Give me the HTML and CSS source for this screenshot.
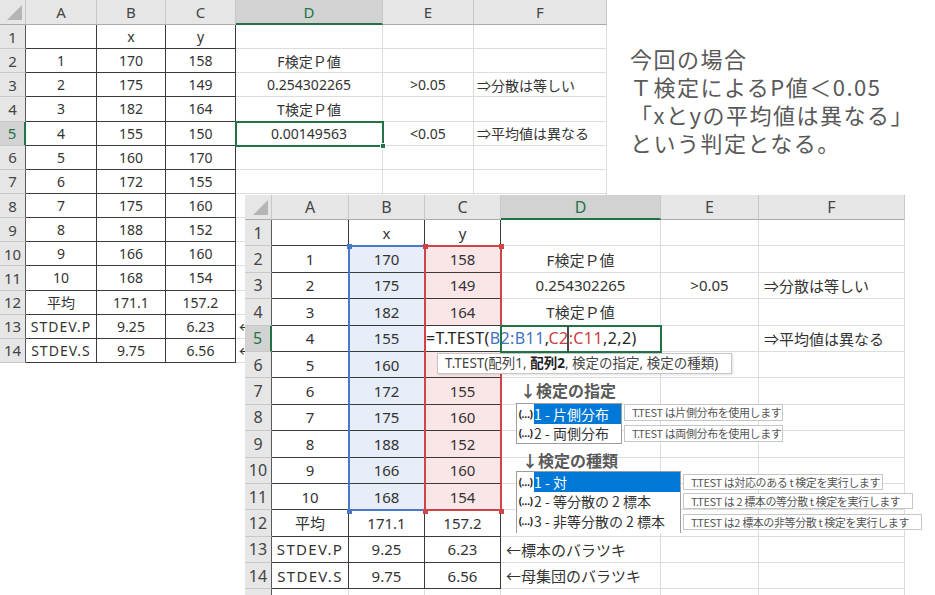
FILE: index.html
```html
<!DOCTYPE html>
<html lang="ja">
<head>
  <meta charset="UTF-8">
  <title>T.TEST</title>
  <link rel="stylesheet" href="styles.css">
</head>
<body>
  <!-- sheet behind -->
  <div class="win win1">
    <div class="grid g1">
      <div class="corner"><svg width="26" height="24"><path d="M22 5V20H7Z" fill="#b5b5b5"/></svg></div>
      <div class="ch">A</div><div class="ch">B</div><div class="ch">C</div><div class="ch on">D</div><div class="ch">E</div><div class="ch">F</div>

      <div class="rh">1</div><div class="t"></div><div class="t">x</div><div class="t">y</div><div></div><div></div><div></div>
      <div class="rh">2</div><div class="t">1</div><div class="t">170</div><div class="t">158</div><div>F検定Ｐ値</div><div></div><div></div>
      <div class="rh">3</div><div class="t">2</div><div class="t">175</div><div class="t">149</div><div>0.254302265</div><div>&gt;0.05</div><div class="l">⇒分散は等しい</div>
      <div class="rh">4</div><div class="t">3</div><div class="t">182</div><div class="t">164</div><div>T検定Ｐ値</div><div></div><div></div>
      <div class="rh on">5</div><div class="t">4</div><div class="t">155</div><div class="t">150</div><div>0.00149563</div><div>&lt;0.05</div><div class="l">⇒平均値は異なる</div>
      <div class="rh">6</div><div class="t">5</div><div class="t">160</div><div class="t">170</div><div></div><div></div><div></div>
      <div class="rh">7</div><div class="t">6</div><div class="t">172</div><div class="t">155</div><div></div><div></div><div></div>
      <div class="rh">8</div><div class="t">7</div><div class="t">175</div><div class="t">160</div><div></div><div></div><div></div>
      <div class="rh">9</div><div class="t">8</div><div class="t">188</div><div class="t">152</div><div></div><div></div><div></div>
      <div class="rh">10</div><div class="t">9</div><div class="t">166</div><div class="t">160</div><div></div><div></div><div></div>
      <div class="rh">11</div><div class="t">10</div><div class="t">168</div><div class="t">154</div><div></div><div></div><div></div>
      <div class="rh">12</div><div class="t">平均</div><div class="t">171.1</div><div class="t">157.2</div><div></div><div></div><div></div>
      <div class="rh">13</div><div class="t w">STDEV.P</div><div class="t">9.25</div><div class="t">6.23</div><div class="l"><span class="cut">←</span></div><div></div><div></div>
      <div class="rh">14</div><div class="t w">STDEV.S</div><div class="t">9.75</div><div class="t">6.56</div><div class="l"><span class="cut">←</span></div><div></div><div></div>
    </div>
    <div class="sel1"></div>
    <div class="handle"></div>
  </div>

  <!-- sheet in front, editing D5 -->
  <div class="win win2">
    <div class="grid g2">
      <div class="corner"><svg width="27" height="24"><path d="M23 5V20H8Z" fill="#b5b5b5"/></svg></div>
      <div class="ch">A</div><div class="ch">B</div><div class="ch">C</div><div class="ch on">D</div><div class="ch">E</div><div class="ch">F</div>

      <div class="rh">1</div><div class="t"></div><div class="t">x</div><div class="t">y</div><div></div><div></div><div></div>
      <div class="rh">2</div><div class="t">1</div><div class="t bx">170</div><div class="t rx">158</div><div>F検定Ｐ値</div><div></div><div></div>
      <div class="rh">3</div><div class="t">2</div><div class="t bx">175</div><div class="t rx">149</div><div>0.254302265</div><div>&gt;0.05</div><div class="l">⇒分散は等しい</div>
      <div class="rh">4</div><div class="t">3</div><div class="t bx">182</div><div class="t rx">164</div><div>T検定Ｐ値</div><div></div><div></div>
      <div class="rh on">5</div><div class="t">4</div><div class="t bx">155</div><div class="t rx"></div><div></div><div></div><div class="l">⇒平均値は異なる</div>
      <div class="rh">6</div><div class="t">5</div><div class="t bx">160</div><div class="t rx"></div><div></div><div></div><div></div>
      <div class="rh">7</div><div class="t">6</div><div class="t bx">172</div><div class="t rx">155</div><div></div><div></div><div></div>
      <div class="rh">8</div><div class="t">7</div><div class="t bx">175</div><div class="t rx">160</div><div></div><div></div><div></div>
      <div class="rh">9</div><div class="t">8</div><div class="t bx">188</div><div class="t rx">152</div><div></div><div></div><div></div>
      <div class="rh">10</div><div class="t">9</div><div class="t bx">166</div><div class="t rx">160</div><div></div><div></div><div></div>
      <div class="rh">11</div><div class="t">10</div><div class="t bx">168</div><div class="t rx">154</div><div></div><div></div><div></div>
      <div class="rh">12</div><div class="t">平均</div><div class="t">171.1</div><div class="t">157.2</div><div></div><div></div><div></div>
      <div class="rh">13</div><div class="t w">STDEV.P</div><div class="t">9.25</div><div class="t">6.23</div><div class="l">←標本のバラツキ</div><div></div><div></div>
      <div class="rh">14</div><div class="t w">STDEV.S</div><div class="t">9.75</div><div class="t">6.56</div><div class="l">←母集団のバラツキ</div><div></div><div></div>
      <div class="rh"></div><div></div><div></div><div></div><div></div><div></div><div></div>
    </div>

    <div class="edit">=T.TEST(<span class="blue">B2:B11</span>,<span class="red">C2:C11</span>,2,2)</div>
    <div class="range rb"></div>
    <div class="range rr"></div>
    <div class="knob kb1"></div><div class="knob kb2"></div>
    <div class="knob kr1"></div><div class="knob kr2"></div><div class="knob kr3"></div><div class="knob kr4"></div>
    <div class="sel2"></div>
    <div class="caret"></div>

    <div class="ftip">T.TEST(配列1, <b>配列2</b>, 検定の指定, 検定の種類)</div>

    <div class="lbl lbl1">↓検定の指定</div>
    <div class="lb lb1">
      <div class="opt sel"><span class="ico">(…)</span><span class="txt">1 - 片側分布</span></div>
      <div class="opt"><span class="ico">(…)</span><span class="txt">2 - 両側分布</span></div>
    </div>
    <div class="tip tip1a">T.TEST は片側分布を使用します</div>
    <div class="tip tip1b">T.TEST は両側分布を使用します</div>

    <div class="lbl lbl2">↓検定の種類</div>
    <div class="lb lb2">
      <div class="opt sel"><span class="ico">(…)</span><span class="txt">1 - 対</span></div>
      <div class="opt"><span class="ico">(…)</span><span class="txt">2 - 等分散の 2 標本</span></div>
      <div class="opt"><span class="ico">(…)</span><span class="txt">3 - 非等分散の 2 標本</span></div>
    </div>
    <div class="tip tip2a">T.TEST は対応のある t 検定を実行します</div>
    <div class="tip tip2b">T.TEST は 2 標本の等分散 t 検定を実行します</div>
    <div class="tip tip2c">T.TEST は2 標本の非等分散 t 検定を実行します</div>
  </div>

  <div class="note">
    今回の場合<br>
    Ｔ検定によるP値＜0.05<br>
    「xとyの平均値は異なる」<br>
    という判定となる。
  </div>
</body>
</html>
```

FILE: styles.css
```css
body {
  margin: 0;
  width: 935px;
  height: 595px;
  overflow: hidden;
  position: relative;
  background: #fff;
  font-family: "Noto Sans", "Noto Sans CJK JP", sans-serif;
  color: #333;
}

.win {
  position: absolute;
}

.win1 { left: 0; top: 0; }
.win2 { left: 245px; top: 195px; }

.grid {
  display: grid;
  background: #fff;
}

.g1 {
  grid-template-columns: 26px 71px 69px 70px 147px 91px 133px;
  grid-template-rows: 25px repeat(14, 24.15px);
  font-size: 14px;
}

.g2 {
  grid-template-columns: 27px 77px 76px 76px 160px 98px 146px;
  grid-template-rows: 25px repeat(15, 26.4px);
  font-size: 15px;
}

.grid > div {
  box-sizing: border-box;
  display: flex;
  align-items: center;
  justify-content: center;
  white-space: nowrap;
  border-right: 1px solid #dcdcdc;
  border-bottom: 1px solid #dcdcdc;
}

.grid > .l { justify-content: flex-start; padding-left: 5px; }
.g1 > .l { padding-left: 3px; }

.cut {
  display: block;
  width: 6px;
  overflow: hidden;
}

.grid > .t {
  border-right-color: #3a3a3a;
  border-bottom-color: #3a3a3a;
}

.g1 .w { letter-spacing: 1px; }
.g2 .w { letter-spacing: 1.3px; }

.grid > .bx { background: #e7eef9; }
.grid > .rx { background: #fbe6e7; }

.grid > .corner,
.grid > .ch,
.grid > .rh {
  background: #e6e6e6;
  color: #444;
  border-right-color: #c8c8c8;
  border-bottom-color: #c8c8c8;
}

.grid > .corner { align-items: flex-start; justify-content: flex-start; border-bottom-color: #ababab; }
.grid > .ch { border-bottom-color: #ababab; }
.grid > .rh { border-right-color: #5a5a5a; }

.g1 .ch, .g1 .rh { font-size: 15px; }
.g2 .ch, .g2 .rh { font-size: 16px; }

.grid > .ch.on {
  background: #d2d2d2;
  color: #217346;
  border-bottom: 2px solid #217346;
}

.grid > .rh.on {
  background: #d2d2d2;
  color: #217346;
  border-right: 2px solid #217346;
}

/* active cell on sheet 1 */
.sel1 {
  position: absolute;
  left: 235px;
  top: 120.6px;
  width: 149px;
  height: 26.2px;
  border: 2px solid #217346;
  box-sizing: border-box;
}

.handle {
  position: absolute;
  left: 380px;
  top: 142.5px;
  width: 6px;
  height: 6px;
  background: #217346;
  border: 1px solid #fff;
  box-sizing: border-box;
}

/* in-cell edit on sheet 2 */
.edit {
  position: absolute;
  left: 180px;
  top: 130.6px;
  width: 236px;
  height: 25.4px;
  background: #fff;
  font-size: 16px;
  letter-spacing: 0.4px;
  line-height: 25px;
  padding-left: 1px;
  box-sizing: border-box;
  white-space: nowrap;
  color: #262626;
}

.blue { color: #4472c4; }
.red { color: #c8403f; }

.range {
  position: absolute;
  top: 50.4px;
  width: 78px;
  height: 266px;
  box-sizing: border-box;
  border: 2px solid;
}

.rb { left: 103px; border-color: #4a78c8; }
.rr { left: 179px; border-color: #cf4446; }

.knob {
  position: absolute;
  width: 5px;
  height: 5px;
}

.kb1 { left: 102px; top: 49px; background: #4a78c8; }
.kb2 { left: 102px; top: 313.5px; background: #4a78c8; }
.kr1 { left: 178px; top: 49px; background: #cf4446; }
.kr2 { left: 254px; top: 49px; background: #cf4446; }
.kr3 { left: 178px; top: 313.5px; background: #cf4446; }
.kr4 { left: 254px; top: 313.5px; background: #cf4446; }

.sel2 {
  position: absolute;
  left: 255px;
  top: 129.6px;
  width: 162px;
  height: 28.4px;
  border: 2px solid #217346;
  box-sizing: border-box;
}

.caret {
  position: absolute;
  left: 322px;
  top: 131px;
  width: 2px;
  height: 26px;
  background: #4a4a4a;
}

.ftip {
  position: absolute;
  left: 192px;
  top: 158px;
  width: 295px;
  height: 21px;
  box-sizing: border-box;
  background: #fff;
  border: 1px solid #c6c6c6;
  box-shadow: 1px 1px 2px rgba(0, 0, 0, 0.12);
  padding-left: 7px;
  font-size: 13.5px;
  line-height: 19px;
  color: #444;
  white-space: nowrap;
}

.ftip b { color: #222; }

.lbl {
  position: absolute;
  font-family: "Noto Sans CJK JP", sans-serif;
  font-size: 16px;
  font-weight: bold;
  line-height: 22px;
  color: #595959;
}

.lbl1 { left: 275px; top: 184px; }
.lbl2 { left: 277px; top: 254px; }

.lb {
  position: absolute;
  background: #fff;
  border: 1px solid #9c9c9c;
  box-sizing: border-box;
  font-family: "Noto Sans CJK JP", sans-serif;
  font-size: 14px;
  color: #333;
}

.lb1 { left: 271px; top: 208px; width: 106px; height: 41px; }
.lb2 { left: 271px; top: 276px; width: 165px; height: 62px; border-bottom: none; }

.opt {
  display: flex;
  height: 19.5px;
}

.ico {
  width: 17px;
  font-family: "Noto Sans", sans-serif;
  font-size: 10px;
  font-weight: bold;
  color: #111;
  letter-spacing: -0.6px;
  display: flex;
  align-items: center;
  justify-content: center;
}

.txt {
  flex: 1;
  display: flex;
  align-items: center;
  white-space: nowrap;
}

.opt.sel .txt {
  background: #0078d7;
  color: #fff;
}

.tip {
  position: absolute;
  left: 379px;
  height: 17px;
  box-sizing: border-box;
  background: #fff;
  border: 1px solid #c6c6c6;
  padding-left: 7px;
  font-family: "Noto Sans CJK JP", sans-serif;
  font-size: 11px;
  letter-spacing: -0.4px;
  line-height: 15px;
  color: #555;
  white-space: nowrap;
}

.tip1a { top: 209px; width: 159px; }
.tip1b { top: 230px; width: 159px; }
.tip2a { left: 438px; top: 279px; width: 200px; height: 16px; }
.tip2b { left: 438px; top: 298px; width: 230px; height: 16px; }
.tip2c { left: 438px; top: 319px; width: 239px; height: 16px; }

.note {
  position: absolute;
  left: 630px;
  top: 44px;
  font-family: "Noto Sans CJK JP", sans-serif;
  font-size: 22px;
  line-height: 28px;
  letter-spacing: 1.5px;
  color: #595959;
  white-space: nowrap;
}
```
